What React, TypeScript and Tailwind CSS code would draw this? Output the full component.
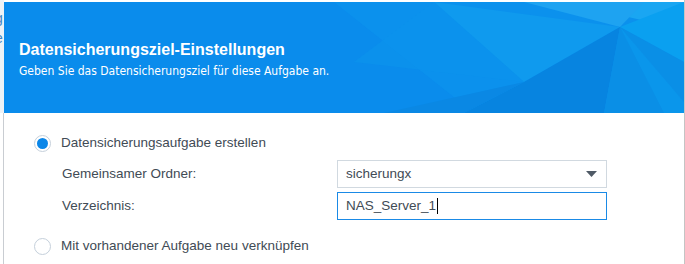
import React from "react";

const font = { fontFamily: '"Liberation Sans", Arial, sans-serif' };
const narrow = { fontFamily: '"DejaVu Sans Condensed", "Liberation Sans", sans-serif' };

function Radio({ checked }: { checked?: boolean }) {
  return (
    <span className="flex h-[17px] w-[17px] items-center justify-center rounded-full border border-[#c5d0db] bg-white">
      {checked && <span className="h-[11px] w-[11px] rounded-full bg-[#0a86e8]" />}
    </span>
  );
}

export default function App() {
  return (
    <div className="flex h-[264px] w-[685px] bg-white text-[13.5px] text-[#414b55]" style={font}>
      {/* cut-off page behind the dialog */}
      <div className="flex w-[4px] flex-col">
        <div className="h-[113px] overflow-hidden bg-[#eef2f6] text-[14px] leading-[20px] text-[#3d86c6]">
          <div className="-ml-[5px] mt-[8px]">g</div>
          <div className="-ml-[5px]">e</div>
        </div>
        <div className="flex-1 border-r border-[#c9cdd2]" />
      </div>

      <div className="flex flex-1 flex-col border-r border-[#c4c4c4] pt-[2px]">
        <div className="relative h-[111px] overflow-hidden bg-[#0a8cec]">
          <svg className="absolute inset-0" width="680" height="111" viewBox="0 0 680 111" preserveAspectRatio="none">
            <polygon points="330,0 680,0 680,111 470,111" fill="#0c95ee" opacity="0.6" />
            <polygon points="620,0 680,0 680,28 560,0" fill="#1aa6f2" />
            <polygon points="520,0 640,0 616,25" fill="#1ea3f1" />
            <polygon points="616,25 680,0 680,60" fill="#0aa0f0" />
            <polygon points="430,0 616,25 520,80" fill="#0f9aee" />
            <polygon points="520,80 616,25 600,111 460,111" fill="#0784e0" />
            <polygon points="616,25 680,60 680,111 600,111" fill="#0a8fe6" />
            <polygon points="616,25 680,100 680,111 660,111" fill="#0a99ec" opacity="0.7" />
            <polygon points="380,111 520,80 460,111" fill="#0a88e4" />
            <polygon points="350,60 520,80 430,0" fill="#0b93ec" opacity="0.7" />
          </svg>
          <div className="relative pl-[15px] pt-[38px] text-white">
            <div className="text-[16px] font-bold leading-[19px]">Datensicherungsziel-Einstellungen</div>
            <div className="mt-[4px] text-[12px] leading-[16px]" style={narrow}>
              Geben Sie das Datensicherungsziel für diese Aufgabe an.
            </div>
          </div>
        </div>

        <div className="flex flex-col pl-[30px] pt-[21px]">
          <div className="flex h-[18px] items-center gap-[10px]">
            <Radio checked />
            <span>Datensicherungsaufgabe erstellen</span>
          </div>
          <div className="mt-[8px] flex flex-col gap-[4px] pl-[28px]">
            <div className="flex items-center">
              <span className="w-[275px]">Gemeinsamer Ordner:</span>
              <div className="flex h-[28px] w-[270px] items-center justify-between border border-[#d1d9e0] pl-[8px] pr-[9px]">
                <span>sicherungx</span>
                <svg width="11" height="6" viewBox="0 0 11 6"><polygon points="0,0 11,0 5.5,6" fill="#4f5a66" /></svg>
              </div>
            </div>
            <div className="flex items-center">
              <span className="w-[275px]">Verzeichnis:</span>
              <div className="flex h-[28px] w-[270px] items-center border border-[#1a8ae6] pl-[8px]">
                <span>NAS_Server_1</span>
                <span className="ml-[1px] h-[16px] w-[1px] bg-black" />
              </div>
            </div>
          </div>
          <div className="mt-[17px] flex h-[18px] items-center gap-[10px]">
            <Radio />
            <span>Mit vorhandener Aufgabe neu verknüpfen</span>
          </div>
        </div>
      </div>
    </div>
  );
}
